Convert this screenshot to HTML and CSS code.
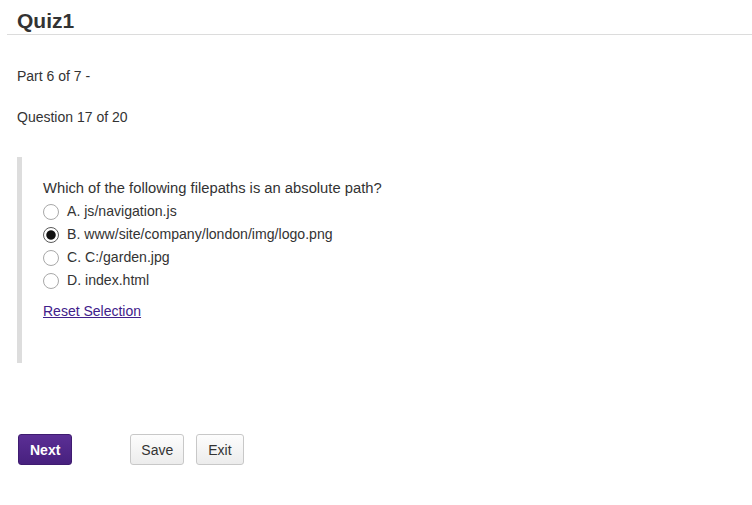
FILE: index.html
```html
<!DOCTYPE html>
<html lang="en">
<head>
<meta charset="utf-8">
<title>Quiz1</title>
<link rel="stylesheet" href="styles.css">
</head>
<body>
<header class="header">
  <h1 class="title">Quiz1</h1>
</header>
<main class="content">
  <p class="meta part">Part 6 of 7 -</p>
  <p class="meta question-count">Question 17 of 20</p>
  <section class="question">
    <p class="prompt">Which of the following filepaths is an absolute path?</p>
    <ul class="options">
      <li class="option"><input type="radio" name="q17" id="o1" class="radio"><label for="o1">A. js/navigation.js</label></li>
      <li class="option"><input type="radio" name="q17" id="o2" class="radio" checked><label for="o2">B. www/site/company/london/img/logo.png</label></li>
      <li class="option"><input type="radio" name="q17" id="o3" class="radio"><label for="o3">C. C:/garden.jpg</label></li>
      <li class="option"><input type="radio" name="q17" id="o4" class="radio"><label for="o4">D. index.html</label></li>
    </ul>
    <a href="#" class="reset">Reset Selection</a>
  </section>
  <div class="actions">
    <button class="btn btn-primary">Next</button>
    <div class="secondary">
      <button class="btn btn-default btn-save">Save</button>
      <button class="btn btn-default btn-exit">Exit</button>
    </div>
  </div>
</main>
</body>
</html>
```
FILE: styles.css
```css
* { box-sizing: border-box; }
html, body {
  margin: 0;
  padding: 0;
  background: #fff;
}
body {
  font-family: "Liberation Sans", Helvetica, Arial, sans-serif;
  font-size: 14px;
  line-height: 20px;
  color: #333;
}
.header {
  margin-left: 7px;
  border-bottom: 1px solid #dcdcdc;
  padding: 9px 0 1px 10px;
}
.title {
  margin: 0;
  font-size: 21px;
  line-height: 24px;
  font-weight: bold;
  color: #333;
}
.content {
  padding-left: 17px;
}
.meta {
  margin: 0;
}
.part {
  margin-top: 31px;
}
.question-count {
  margin-top: 21px;
}
.question {
  margin-top: 30px;
  border-left: 5px solid #ddd;
  padding: 21px 0 42px 21px;
  width: 420px;
}
.prompt {
  margin: 0;
  font-size: 14.75px;
}
.options {
  list-style: none;
  margin: 2px 0 0 0;
  padding: 0;
}
.option {
  display: flex;
  align-items: center;
  height: 23px;
  line-height: 23px;
  gap: 8px;
}
.option label {
  font-size: 14.1px;
}
.radio {
  appearance: none;
  -webkit-appearance: none;
  margin: 0;
  width: 16px;
  height: 16px;
  border: 1px solid #a8a8a8;
  border-radius: 50%;
  background: #fff;
  flex: none;
}
.radio:checked {
  border-color: #5a5a5a;
  background: radial-gradient(circle, #111 0, #111 4.2px, #fff 5.2px);
}
.reset {
  display: inline-block;
  margin-top: 9px;
  color: #41208a;
  text-decoration: underline;
}
.actions {
  display: flex;
  gap: 58px;
  margin-top: 71px;
  padding-left: 1px;
}
.secondary {
  display: flex;
  gap: 12px;
}
.btn {
  height: 31px;
  padding: 0 11px;
  font-family: inherit;
  font-size: 14px;
  border-radius: 3px;
  cursor: pointer;
}
.btn-primary {
  color: #fff;
  font-weight: bold;
  background: linear-gradient(#5b2f95, #47207e);
  border: 1px solid #3f1c70;
}
.btn-default {
  color: #333;
  background: linear-gradient(#fdfdfd, #ececec);
  border: 1px solid #c8c8c8;
}
.btn-save {
  padding: 0 10px;
}
.btn-exit {
  padding: 0 11px;
}
```
